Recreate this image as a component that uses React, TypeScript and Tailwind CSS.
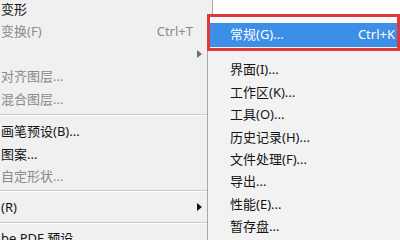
import React from "react";

const font = { fontFamily: '"Noto Sans", "Noto Sans CJK SC", sans-serif' };

function Arrow({ color }: { color: string }) {
  return (
    <svg width="5" height="8" viewBox="0 0 5 8" className="block">
      <path d="M0 0 L5 4 L0 8 Z" fill={color} />
    </svg>
  );
}

function LeftRow({
  text,
  dim,
  shortcut,
  arrow,
  h,
}: {
  text: string;
  dim?: boolean;
  shortcut?: string;
  arrow?: string;
  h: string;
}) {
  return (
    <div className={`shrink-0 flex items-center pl-[1px] ${h}`}>
      <span className={`flex-1 whitespace-nowrap ${dim ? "text-[#8a8a8a]" : "text-[#141414]"}`}>{text}</span>
      {shortcut && <span className="text-[#8a8a8a] pr-[14px]">{shortcut}</span>}
      {arrow && (
        <span className="pr-[5px]">
          <Arrow color={arrow} />
        </span>
      )}
    </div>
  );
}

function Sep({ h, mt }: { h: string; mt: string }) {
  return (
    <div className={`shrink-0 ${h}`}>
      <div className={`${mt} h-px bg-[#c9c9c9]`} />
      <div className="h-px bg-white" />
    </div>
  );
}

const subItems = ["界面(I)...", "工作区(K)...", "工具(O)...", "历史记录(H)...", "文件处理(F)...", "导出...", "性能(E)...", "暂存盘..."];

export default function App() {
  return (
    <div className="w-[400px] h-[240px] overflow-hidden flex items-start bg-[#f0f0f0] text-[13px]" style={font}>
      {/* left menu */}
      <div className="w-[207px] shrink-0 flex flex-col mt-[-2px]">
        <LeftRow h="h-[22.5px]" text="变形" />
        <LeftRow h="h-[22.5px]" text="变换(F)" dim shortcut="Ctrl+T" />
        <LeftRow h="h-[22.5px]" text="" arrow="#707070" />
        <LeftRow h="h-[22.5px]" text="对齐图层..." dim />
        <LeftRow h="h-[22.5px]" text="混合图层..." dim />
        <Sep h="h-[10px]" mt="mt-[3px]" />
        <LeftRow h="h-[22.5px]" text="画笔预设(B)..." />
        <LeftRow h="h-[22.5px]" text="图案..." />
        <LeftRow h="h-[22.5px]" text="自定形状..." dim />
        <Sep h="h-[8px]" mt="mt-[2px]" />
        <LeftRow h="h-[22.5px]" text="(R)" arrow="#141414" />
        <Sep h="h-[8.5px]" mt="mt-[3.5px]" />
        <LeftRow h="h-[22.5px]" text="be PDF 预设" />
      </div>

      {/* submenu */}
      <div className="flex-1 h-[240px] flex flex-col">
        <div className="h-[14px] shrink-0 flex">
          <div className="w-[5px] bg-[#f0f0f0]" />
          <div className="w-px bg-[#a8a8a8]" />
          <div className="flex-1 bg-white" />
        </div>
        <div className="h-[37px] shrink-0 border-[3px] border-[#e0393c] bg-[#f2f2f2] flex flex-col">
          <div className="h-[6px] bg-[#f7f7f7]" />
          <div className="h-[24px] bg-[#3d8ee6] flex items-center text-white">
            <span className="pl-[20px] flex-1">常规(G)...</span>
            <span className="pr-[2px]">Ctrl+K</span>
          </div>
        </div>
        <div className="flex-1 flex">
          <div className="w-px bg-[#a8a8a8]" />
          <div className="flex-1 flex flex-col pt-[8px] bg-[#f2f2f2]">
            {subItems.map((t) => (
              <div key={t} className="shrink-0 h-[22.4px] flex items-center pl-[22px] text-[#141414] whitespace-nowrap">
                {t}
              </div>
            ))}
          </div>
        </div>
      </div>
    </div>
  );
}
